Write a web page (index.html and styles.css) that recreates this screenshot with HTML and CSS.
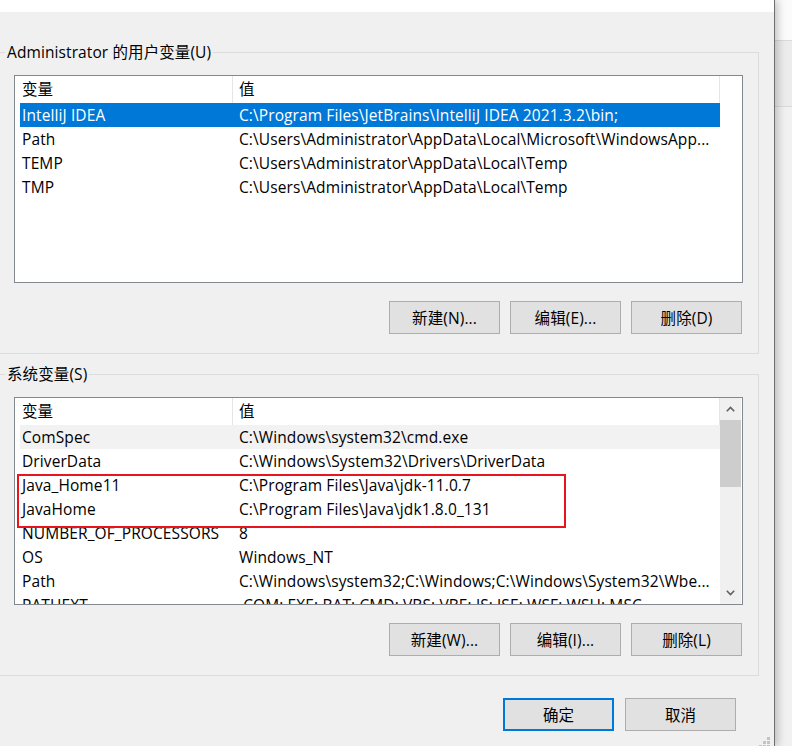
FILE: index.html
```html
<!DOCTYPE html>
<html lang="zh-CN">
<head>
    <meta charset="UTF-8">
    <meta name="viewport" content="width=device-width, initial-scale=1.0">
    <title>环境变量</title>
    <link rel="stylesheet" href="styles.css">
</head>
<body>
    <div class="screen">
        <div class="dialog">
            <div class="dialog-top"></div>

            <!-- 用户变量 -->
            <fieldset class="group">
                <legend>Administrator 的用户变量(U)</legend>
                <div class="list">
                    <div class="list-main">
                        <div class="list-header">
                            <div class="col-name">变量</div>
                            <div class="col-value">值</div>
                        </div>
                        <div class="row selected">
                            <span class="cell-name">IntelliJ IDEA</span>
                            <span class="cell-value">C:\Program Files\JetBrains\IntelliJ IDEA 2021.3.2\bin;</span>
                        </div>
                        <div class="row">
                            <span class="cell-name">Path</span>
                            <span class="cell-value">C:\Users\Administrator\AppData\Local\Microsoft\WindowsApp...</span>
                        </div>
                        <div class="row">
                            <span class="cell-name">TEMP</span>
                            <span class="cell-value">C:\Users\Administrator\AppData\Local\Temp</span>
                        </div>
                        <div class="row">
                            <span class="cell-name">TMP</span>
                            <span class="cell-value">C:\Users\Administrator\AppData\Local\Temp</span>
                        </div>
                    </div>
                </div>
                <div class="buttons">
                    <button class="btn">新建(N)...</button>
                    <button class="btn">编辑(E)...</button>
                    <button class="btn">删除(D)</button>
                </div>
            </fieldset>

            <!-- 系统变量 -->
            <fieldset class="group group-system">
                <legend>系统变量(S)</legend>
                <div class="list">
                    <div class="list-main">
                        <div class="list-header">
                            <div class="col-name">变量</div>
                            <div class="col-value">值</div>
                        </div>
                        <div class="row hover">
                            <span class="cell-name">ComSpec</span>
                            <span class="cell-value">C:\Windows\system32\cmd.exe</span>
                        </div>
                        <div class="row">
                            <span class="cell-name">DriverData</span>
                            <span class="cell-value">C:\Windows\System32\Drivers\DriverData</span>
                        </div>
                        <div class="row">
                            <span class="cell-name">Java_Home11</span>
                            <span class="cell-value">C:\Program Files\Java\jdk-11.0.7</span>
                        </div>
                        <div class="row">
                            <span class="cell-name">JavaHome</span>
                            <span class="cell-value">C:\Program Files\Java\jdk1.8.0_131</span>
                        </div>
                        <div class="row">
                            <span class="cell-name">NUMBER_OF_PROCESSORS</span>
                            <span class="cell-value">8</span>
                        </div>
                        <div class="row">
                            <span class="cell-name">OS</span>
                            <span class="cell-value">Windows_NT</span>
                        </div>
                        <div class="row">
                            <span class="cell-name">Path</span>
                            <span class="cell-value">C:\Windows\system32;C:\Windows;C:\Windows\System32\Wbe...</span>
                        </div>
                        <div class="row">
                            <span class="cell-name">PATHEXT</span>
                            <span class="cell-value">.COM;.EXE;.BAT;.CMD;.VBS;.VBE;.JS;.JSE;.WSF;.WSH;.MSC</span>
                        </div>
                        <div class="mark"></div>
                    </div>
                    <div class="scrollbar">
                        <div class="scroll-btn">
                            <svg width="9" height="6" viewBox="0 0 9 6"><polyline points="0.8,5.2 4.5,1.4 8.2,5.2" fill="none" stroke="#606060" stroke-width="1.6"/></svg>
                        </div>
                        <div class="scroll-thumb"></div>
                        <div class="scroll-track"></div>
                        <div class="scroll-btn">
                            <svg width="9" height="6" viewBox="0 0 9 6"><polyline points="0.8,0.8 4.5,4.6 8.2,0.8" fill="none" stroke="#606060" stroke-width="1.6"/></svg>
                        </div>
                    </div>
                </div>
                <div class="buttons">
                    <button class="btn">新建(W)...</button>
                    <button class="btn">编辑(I)...</button>
                    <button class="btn">删除(L)</button>
                </div>
            </fieldset>

            <div class="footer">
                <button class="btn btn-default">确定</button>
                <button class="btn">取消</button>
            </div>

            <svg class="grip" width="11" height="11" viewBox="0 0 11 11">
                <rect x="8" y="0" width="3" height="3"/>
                <rect x="4" y="4" width="3" height="3"/>
                <rect x="8" y="4" width="3" height="3"/>
                <rect x="0" y="8" width="3" height="3"/>
                <rect x="4" y="8" width="3" height="3"/>
                <rect x="8" y="8" width="3" height="3"/>
            </svg>
        </div>

        <!-- 后面的窗口 -->
        <div class="behind">
            <div class="behind-top"></div>
            <div class="behind-mid"></div>
            <div class="behind-rest"></div>
        </div>
    </div>
</body>
</html>
```

FILE: styles.css
```css
* {
    margin: 0;
    padding: 0;
    box-sizing: border-box;
}

body {
    font-family: "Open Sans", "Noto Sans CJK SC", sans-serif;
    font-size: 15.5px;
    letter-spacing: 0.1px;
    color: #000;
    background: #f0f0f0;
    overflow: hidden;
}

.screen {
    display: flex;
    height: 746px;
}

/* 对话框 */
.dialog {
    position: relative;
    z-index: 1;
    flex-shrink: 0;
    width: 775px;
    height: 100%;
    background: #f0f0f0;
    border-right: 1px solid #6e6e6e;
    box-shadow: 3px 0 8px rgba(0,0,0,0.22);
    overflow: hidden;
}

.dialog-top {
    height: 12px;
    background: #fff;
}

/* 分组框 */
.group {
    margin: 30px 15px 0 0;
    border: 1px solid #dcdcdc;
    border-left: 0;
    padding: 0 15px 19px 5px;
}

.group-system {
    margin-top: 10px;
}

.group legend {
    padding: 0 2px;
    line-height: 20px;
}

/* 列表 */
.list {
    display: flex;
    height: 208px;
    margin: 13px 0 0 9px;
    border: 1px solid #828790;
    background: #fff;
}

.list-main {
    position: relative;
    width: 705px;
    overflow: hidden;
}

.list-header {
    display: flex;
    height: 27px;
    line-height: 27px;
}

.col-name {
    width: 218px;
    padding-left: 7px;
    border-right: 1px solid #e5e5e5;
}

.col-value {
    width: 487px;
    padding-left: 6px;
    border-right: 1px solid #e5e5e5;
}

.row {
    display: flex;
    width: 700px;
    height: 24px;
    margin-left: 5px;
    line-height: 24px;
    white-space: nowrap;
}

.row.selected {
    background: #0078d7;
    color: #fff;
}

.row.hover {
    background: #f2f2f2;
}

.cell-name {
    width: 212px;
    padding-left: 2px;
    overflow: hidden;
}

.cell-value {
    flex: 1;
    padding-left: 7px;
    overflow: hidden;
}

.mark {
    position: absolute;
    left: 2px;
    top: 76px;
    width: 549px;
    height: 54px;
    border: 2px solid #e8151f;
}

/* 滚动条 */
.scrollbar {
    display: flex;
    flex-direction: column;
    width: 21px;
    background: #f0f0f0;
}

.scroll-btn {
    display: flex;
    align-items: center;
    justify-content: center;
    height: 22px;
}

.scroll-thumb {
    height: 67px;
    background: #cdcdcd;
}

.scroll-track {
    flex: 1;
}

/* 按钮 */
.buttons {
    display: flex;
    justify-content: flex-end;
    gap: 10px;
    margin: 18px 1px 0 0;
}

.btn {
    width: 111px;
    height: 33px;
    font: inherit;
    letter-spacing: inherit;
    color: #000;
    background: #e1e1e1;
    border: 1px solid #adadad;
}

.btn-default {
    border: 2px solid #0078d7;
}

.footer {
    display: flex;
    justify-content: flex-end;
    gap: 11px;
    margin: 22px 38px 0 0;
}

.grip {
    position: absolute;
    right: 4px;
    bottom: -2px;
    fill: #c4c4c4;
}

/* 背后窗口 */
.behind {
    display: flex;
    flex-direction: column;
    flex: 1;
}

.behind-top {
    height: 41px;
    background: #fbfbfb;
    border-bottom: 1px solid #dadada;
}

.behind-mid {
    height: 66px;
    background: #ececec;
    border-bottom: 1px solid #dadada;
}

.behind-rest {
    flex: 1;
    background: #f1f1f1;
}
```
